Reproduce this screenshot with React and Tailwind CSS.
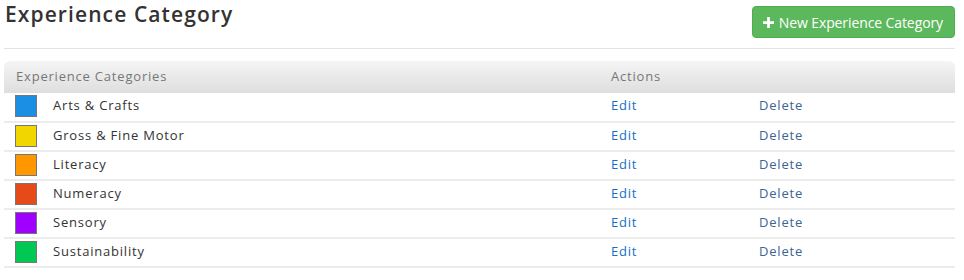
import React from 'react';

const categories = [
  { name: 'Arts & Crafts', color: 'bg-[#1a8fe3]' },
  { name: 'Gross & Fine Motor', color: 'bg-[#f2d600]' },
  { name: 'Literacy', color: 'bg-[#ff9800]' },
  { name: 'Numeracy', color: 'bg-[#e64a19]' },
  { name: 'Sensory', color: 'bg-[#a000ff]' },
  { name: 'Sustainability', color: 'bg-[#00c853]' },
];

export default function App() {
  return (
    <div className="min-h-screen bg-white pl-[4px] pr-[9px]" style={{ fontFamily: '"Open Sans", sans-serif' }}>
      <header className="flex justify-between items-start h-[49px] border-b border-[#e3e3e3]">
        <h1 className="text-[21px] leading-[30px] text-[#333] font-semibold tracking-[1.1px] pl-[1px] -mt-[1px]">Experience Category</h1>
        <button className="mt-[6px] h-[32px] pl-[10px] pr-[11px] flex items-center gap-[5px] rounded-[4px] bg-[#5cb85c] border border-[#4cae4c] text-white text-[14px] tracking-[-0.1px]">
          <svg width="11" height="11" viewBox="0 0 12 12" className="fill-white">
            <path d="M4.5 0h3v4.5H12v3H7.5V12h-3V7.5H0v-3h4.5z" />
          </svg>
          New Experience Category
        </button>
      </header>

      <table className="w-full mt-[12px] text-[13px] tracking-[0.8px] border-collapse">
        <thead>
          <tr className="h-[32px] text-left text-[#777]">
            <th className="font-normal pl-[12px] rounded-tl-[6px] bg-gradient-to-b from-[#f5f5f5] to-[#dedede]">Experience Categories</th>
            <th className="font-normal pl-[2px] w-[150px] bg-gradient-to-b from-[#f5f5f5] to-[#dedede]">Actions</th>
            <th className="font-normal w-[196px] rounded-tr-[6px] bg-gradient-to-b from-[#f5f5f5] to-[#dedede]"></th>
          </tr>
        </thead>
        <tbody>
          {categories.map((c) => (
            <tr key={c.name} className="h-[29px] border-b-2 border-[#ececec]">
              <td className="pl-[11px] pb-[2px]">
                <div className="flex items-center gap-[16px]">
                  <span className={`w-[22px] h-[22px] border border-[#777] ${c.color}`} />
                  <span className="text-[#333]">{c.name}</span>
                </div>
              </td>
              <td className="pl-[2px] pb-[2px] text-[#1570c4]">Edit</td>
              <td className="pb-[2px] text-[#3b6593]">Delete</td>
            </tr>
          ))}
        </tbody>
      </table>
    </div>
  );
}
